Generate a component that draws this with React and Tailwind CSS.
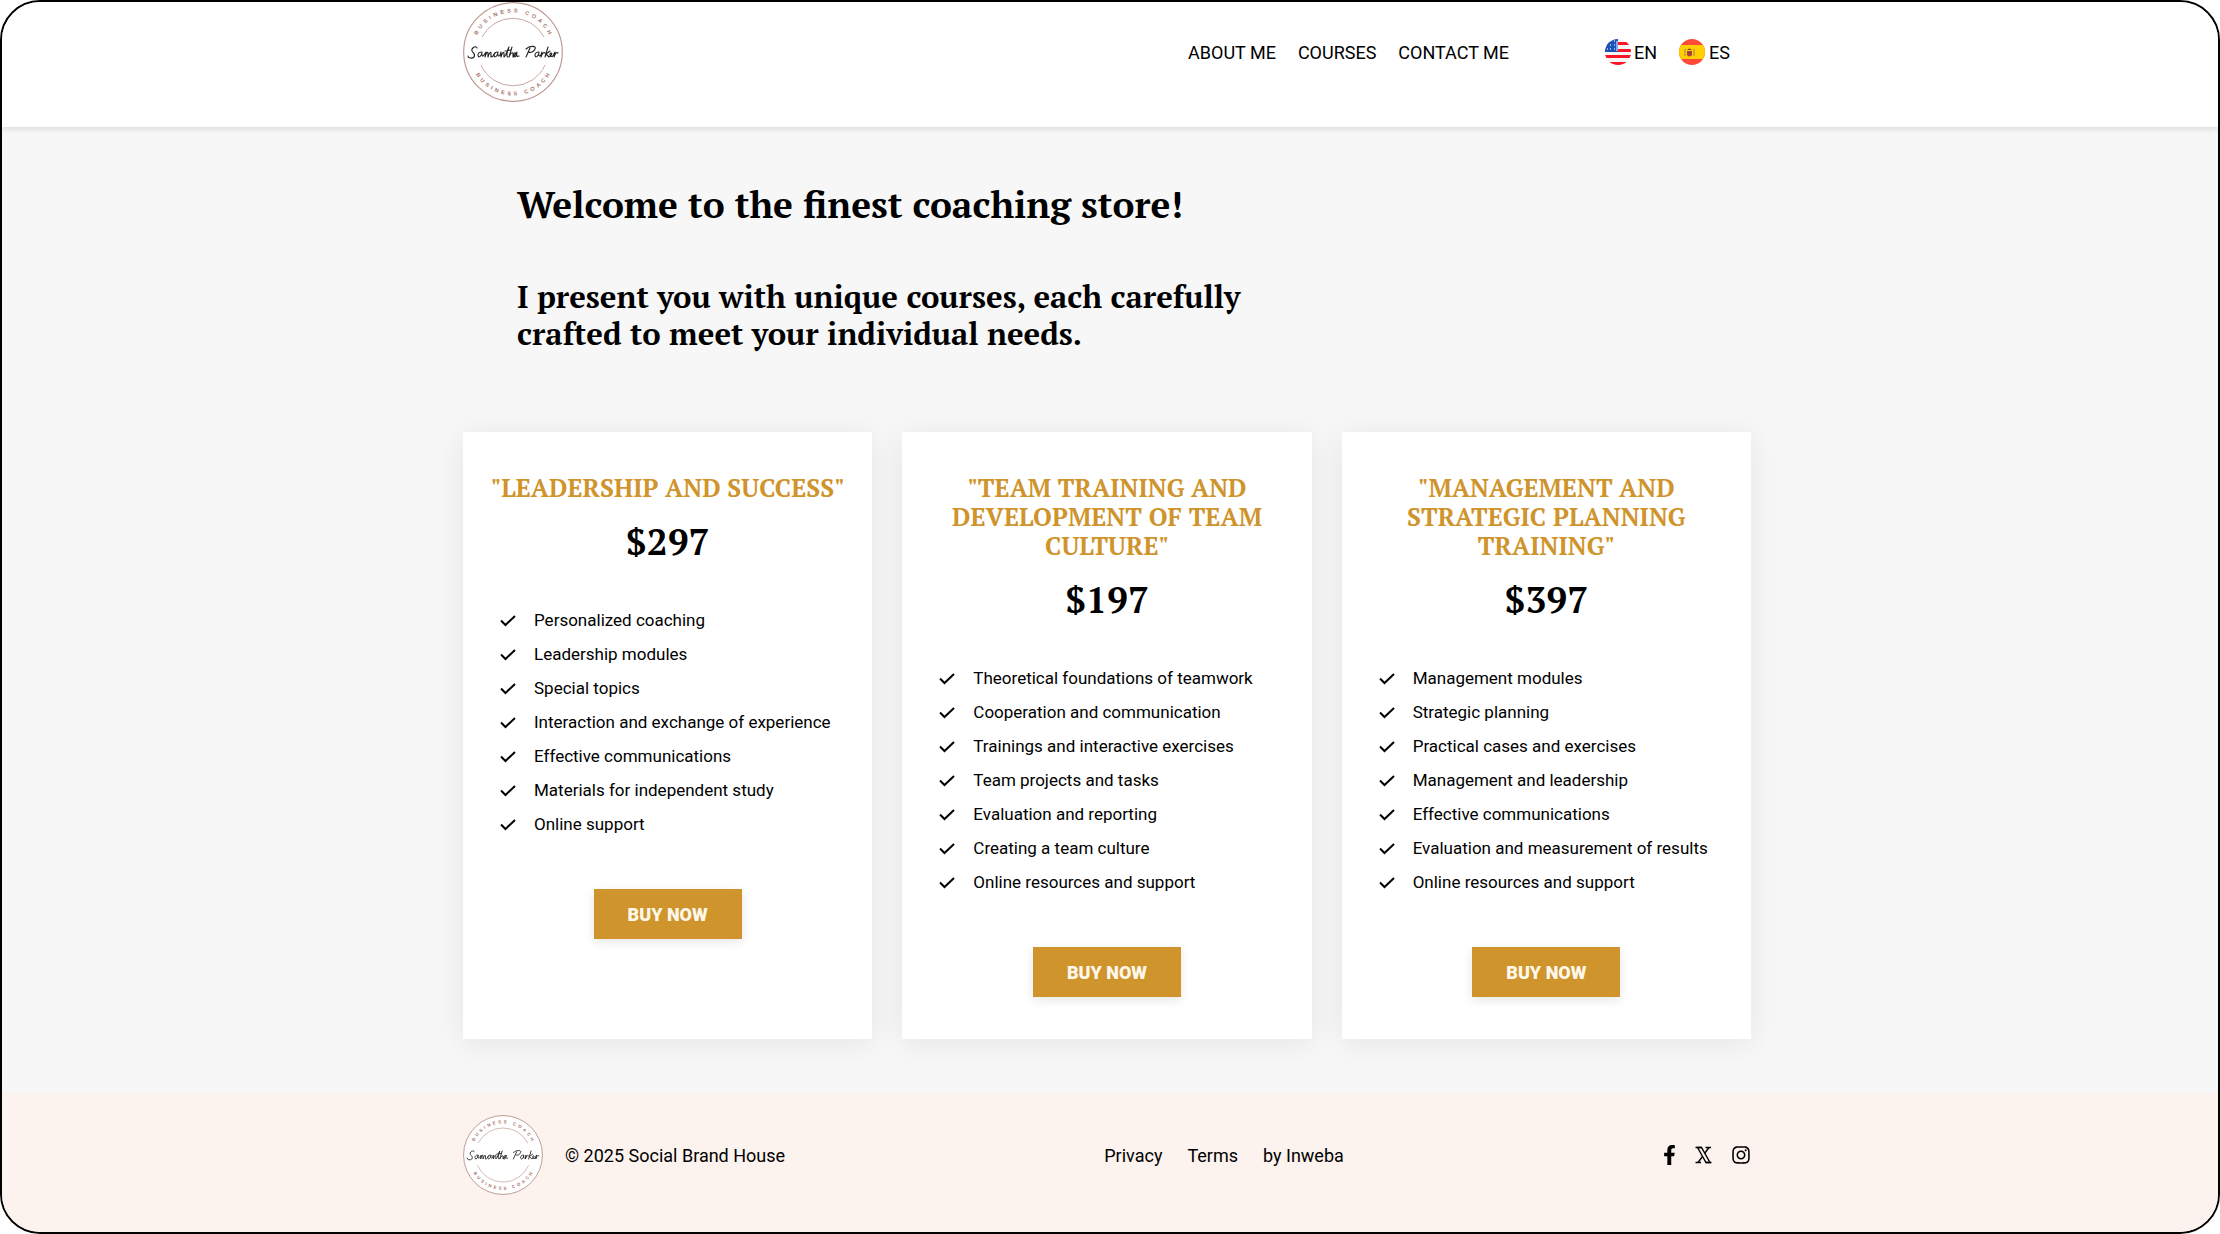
import React from "react";
import { FaFacebookF, FaInstagram } from "react-icons/fa";

const NAV = ["ABOUT ME", "COURSES", "CONTACT ME"];

const COURSES = [
  {
    id: "leadership",
    title: '"LEADERSHIP AND SUCCESS"',
    price: "$297",
    items: [
      "Personalized coaching",
      "Leadership modules",
      "Special topics",
      "Interaction and exchange of experience",
      "Effective communications",
      "Materials for independent study",
      "Online support",
    ],
  },
  {
    id: "team",
    title: '"TEAM TRAINING AND DEVELOPMENT OF TEAM CULTURE"',
    price: "$197",
    items: [
      "Theoretical foundations of teamwork",
      "Cooperation and communication",
      "Trainings and interactive exercises",
      "Team projects and tasks",
      "Evaluation and reporting",
      "Creating a team culture",
      "Online resources and support",
    ],
  },
  {
    id: "management",
    title: '"MANAGEMENT AND STRATEGIC PLANNING TRAINING"',
    price: "$397",
    items: [
      "Management modules",
      "Strategic planning",
      "Practical cases and exercises",
      "Management and leadership",
      "Effective communications",
      "Evaluation and measurement of results",
      "Online resources and support",
    ],
  },
];

function Logo({ id, className }) {
  return (
    <svg viewBox="0 0 100 100" className={className} role="img" aria-label="Samantha Parker">
      <defs>
        <path id={`${id}-top`} d="M 10.5 50 A 39.5 39.5 0 0 1 89.5 50" />
        <path id={`${id}-bottom`} d="M 6.5 50 A 43.5 43.5 0 0 0 93.5 50" />
      </defs>
      <circle cx="50" cy="50" r="49.3" fill="#fff" stroke="#bd9a93" strokeWidth="1.2" />
      <path d="M19 35 A 35 35 0 0 1 81 35" fill="none" stroke="#c9a9a2" strokeWidth="1" />
      <path d="M18 63 A 35 35 0 0 0 82 63" fill="none" stroke="#c9a9a2" strokeWidth="1" />
      <g
        fill="#a8756c"
        fontFamily="'Liberation Sans', sans-serif"
        fontWeight="700"
        fontSize="5.5"
        letterSpacing="3"
        textAnchor="middle"
      >
        <text>
          <textPath href={`#${id}-top`} startOffset="51%">BUSINESS COACH</textPath>
        </text>
        <text>
          <textPath href={`#${id}-bottom`} startOffset="51%">BUSINESS COACH</textPath>
        </text>
      </g>
      {/* handwritten signature */}
      <g fill="none" stroke="#222" strokeWidth="1.1" strokeLinecap="round" strokeLinejoin="round">
        <path d="M14 46 C13 43 8 46 9 49 C10 51 13 52 11 55 C9 57 5 56 5 54" />
        <path d="M18 50 C15 50 14 54 16 55 C18 55 19 51 19 50 C18 54 20 55 21 53 L23 50 L22 55 C23 51 25 49 25 51 L25 55 C26 51 28 49 28 51 L28 55 C30 55 31 53 32 51" />
        <path d="M34 50 C31 50 30 54 32 55 C34 55 35 51 35 50 C34 54 36 55 37 53 L38 50 L38 55 C39 51 41 49 41 51 L41 55 C43 54 44 49 46 45 C44 50 43 55 45 55 M42 49 L48 48" />
        <path d="M49 45 L46 55 C48 50 50 50 50 52 L50 55 C51 55 52 53 53 51 C50 50 50 55 52 55 C53 55 54 51 54 50 C53 54 54 55 56 54" />
        <path d="M67 46 L63 55 M63 47 C67 43 74 44 72 47 C71 50 67 51 66 50" />
        <path d="M75 50 C72 50 71 54 73 55 C75 55 76 51 76 50 C75 54 76 55 78 53 L79 50 L78 55 C79 51 81 50 82 51 M85 45 L82 55 M87 49 L83 52 L86 55 C88 54 90 51 88 51 C86 51 87 56 90 54 L92 50 L91 55 C92 51 94 50 95 51" />
      </g>
    </svg>
  );
}

function FlagUS() {
  return (
    <svg viewBox="0 0 26 26" className="size-[26px]" aria-hidden="true">
      <clipPath id="us-clip">
        <circle cx="13" cy="13" r="13" />
      </clipPath>
      <g clipPath="url(#us-clip)">
        <rect width="26" height="26" fill="#f4f4f4" />
        {[3, 10, 16, 23].map((y) => (
          <rect key={y} y={y} width="26" height="3" fill="#fb1428" />
        ))}
        <rect width="13" height="13" fill="#1a52b8" />
        <path
          d="M5 6h1M9 6h1M5 10h1M9 10h1M9 2h1M2 10h1M12 2v10"
          stroke="#c4d8f5"
          strokeWidth="1.3"
        />
      </g>
    </svg>
  );
}

function FlagES() {
  return (
    <svg viewBox="0 0 26 26" className="size-[26px]" aria-hidden="true">
      <clipPath id="es-clip">
        <circle cx="13" cy="13" r="13" />
      </clipPath>
      <g clipPath="url(#es-clip)">
        <rect width="26" height="26" fill="#ff4b37" />
        <rect y="6" width="26" height="14" fill="#ffcf00" />
        <path d="M6 10v7M15 10v7" stroke="#c9944a" strokeWidth="1.5" />
        <path d="M8 12h5v4q-2.5 3-5 0z" fill="#b4412b" />
        <path d="M8 11q2.5-3 5 0z" fill="#7b4a2c" />
        <circle cx="10.5" cy="14" r="1" fill="#5a4a8a" />
      </g>
    </svg>
  );
}

function Check() {
  return (
    <svg viewBox="0 0 16 16" className="size-4 shrink-0" aria-hidden="true">
      <path d="M1 8.5L5.5 13L15 4" fill="none" stroke="#000" strokeWidth="2" />
    </svg>
  );
}

// double-struck X with serifs
function XLogo() {
  return (
    <svg viewBox="0 0 17 18" className="h-[18px] w-[17px]" fill="none" stroke="#000" aria-hidden="true">
      <path d="M2.5 1.5L11 16.5H15L6.5 1.5Z" strokeWidth="1.4" />
      <path d="M0.5 1.5H7M10.5 16.5H16.5M10.5 1.5H16M0.5 16.5H6" strokeWidth="1.4" />
      <path d="M14 1.5L9.5 7.5M7.5 10.5L3 16.5" strokeWidth="1.4" />
    </svg>
  );
}

function CourseCard({ course }) {
  return (
    <article className="flex flex-col items-center bg-white px-6 pt-[41px] pb-[42px] shadow-[0_4px_30px_rgba(0,0,0,0.08)]">
      <h3 className="text-center font-['PT_Serif','Liberation_Serif',serif] text-[25px] leading-[29px] font-bold text-[#cf942c]">
        {course.title}
      </h3>
      <p className="mt-[14px] font-['PT_Serif','Liberation_Serif',serif] text-[37px] leading-[52px] font-bold">
        {course.price}
      </p>
      <ul className="mt-[35px] w-full pl-[13px]">
        {course.items.map((item) => (
          <li key={item} className="flex items-center gap-[18px] text-[17px] leading-[34px] whitespace-nowrap">
            <Check />
            {item}
          </li>
        ))}
      </ul>
      <button
        type="button"
        className="mt-12 h-[50px] w-[148px] bg-[#cf942c] text-[18px] font-black text-[#fff8ea] shadow-[0_3px_10px_rgba(0,0,0,0.1)]"
      >
        BUY NOW
      </button>
    </article>
  );
}

export default function App() {
  return (
    <div className="flex min-h-screen flex-col overflow-hidden rounded-[40px] border-2 border-black bg-[#f7f7f7] font-[Roboto,sans-serif] text-black">
      <header className="relative bg-white pr-[6px] pb-[25px] shadow-[0_2px_6px_rgba(0,0,0,0.12)]">
        <div className="mx-auto flex max-w-[1288px] items-center">
          <a href="#home">
            <Logo id="header-logo" className="size-[100px]" />
          </a>
          <nav className="ml-auto flex gap-[22px] text-[18px]">
            {NAV.map((label) => (
              <a key={label} href="#nav">
                {label}
              </a>
            ))}
          </nav>
          <div className="mr-[21px] ml-24 flex gap-[22px] text-[18px]">
            <a href="#en" className="flex items-center gap-[3px]">
              <FlagUS />
              EN
            </a>
            <a href="#es" className="flex items-center gap-[4px]">
              <FlagES />
              ES
            </a>
          </div>
        </div>
      </header>

      <main className="grow pr-[6px] pb-[54px]">
        <div className="mx-auto max-w-[1288px]">
          <section className="px-[54px] pt-[54px] font-['PT_Serif','Liberation_Serif',serif] font-bold">
            <h1 className="text-[37px] leading-[48px]">Welcome to the finest coaching store!</h1>
            <h2 className="mt-[49px] max-w-[760px] text-[31px] leading-[37px]">
              I present you with unique courses, each carefully crafted to meet your individual needs.
            </h2>
          </section>
          <section className="mt-[80px] grid grid-cols-3 gap-[30px]">
            {COURSES.map((c) => (
              <CourseCard key={c.id} course={c} />
            ))}
          </section>
        </div>
      </main>

      <footer className="bg-[#fcf3ee] pt-[22px] pr-[6px] pb-[37px]">
        <div className="mx-auto flex max-w-[1288px] items-center justify-between">
          <div className="flex items-center gap-[22px] text-[18px]">
            <Logo id="footer-logo" className="size-20" />
            <p>© 2025 Social Brand House</p>
          </div>
          <nav className="flex gap-[25px] text-[18px]">
            <a href="#privacy">Privacy</a>
            <a href="#terms">Terms</a>
            <a href="#inweba">by Inweba</a>
          </nav>
          <div className="flex items-center gap-[19px]">
            <a href="#facebook" aria-label="Facebook">
              <FaFacebookF className="h-5 w-[13px]" />
            </a>
            <a href="#x" aria-label="X">
              <XLogo />
            </a>
            <a href="#instagram" aria-label="Instagram">
              <FaInstagram size={20} />
            </a>
          </div>
        </div>
      </footer>
    </div>
  );
}
